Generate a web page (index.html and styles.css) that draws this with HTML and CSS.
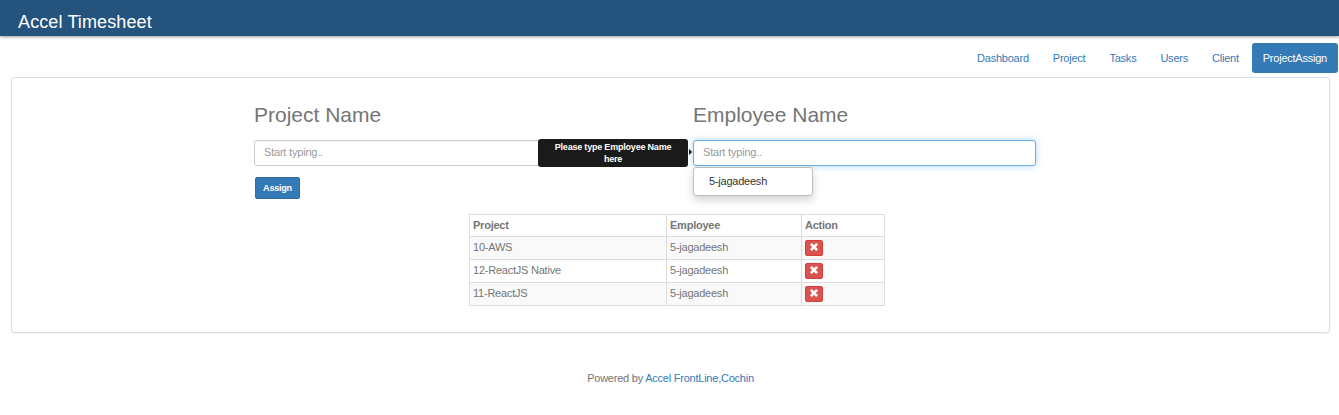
FILE: index.html
```
<!DOCTYPE html>
<html lang="en">
<head>
<meta charset="utf-8">
<title>Accel Timesheet</title>
<link rel="stylesheet" href="styles.css">
</head>
<body>
<header class="topbar"><span class="brand">Accel Timesheet</span></header>
<nav class="nav">
  <a class="nav-link" href="#">Dashboard</a>
  <a class="nav-link" href="#">Project</a>
  <a class="nav-link" href="#">Tasks</a>
  <a class="nav-link" href="#">Users</a>
  <a class="nav-link" href="#">Client</a>
  <a class="nav-link active" href="#">ProjectAssign</a>
</nav>
<main class="panel">
  <div class="fields">
    <section class="field">
      <h3 class="heading">Project Name</h3>
      <input class="input" type="text" placeholder="Start typing..">
      <button class="assign" type="button">Assign</button>
    </section>
    <section class="field">
      <h3 class="heading">Employee Name</h3>
      <div class="combo">
        <input class="input focused" type="text" placeholder="Start typing..">
        <div class="tooltip">Please type Employee Name here</div>
        <ul class="menu"><li>5-jagadeesh</li></ul>
      </div>
    </section>
  </div>
  <table class="table">
    <colgroup><col class="col-project"><col class="col-employee"><col class="col-action"></colgroup>
    <thead><tr><th>Project</th><th>Employee</th><th>Action</th></tr></thead>
    <tbody>
      <tr><td>10-AWS</td><td>5-jagadeesh</td><td class="action"><button class="remove" type="button" aria-label="Remove"><svg viewBox="0 0 10 10"><path d="M1.9 1.9 8.1 8.1M8.1 1.9 1.9 8.1"/></svg></button></td></tr>
      <tr><td>12-ReactJS Native</td><td>5-jagadeesh</td><td class="action"><button class="remove" type="button" aria-label="Remove"><svg viewBox="0 0 10 10"><path d="M1.9 1.9 8.1 8.1M8.1 1.9 1.9 8.1"/></svg></button></td></tr>
      <tr><td>11-ReactJS</td><td>5-jagadeesh</td><td class="action"><button class="remove" type="button" aria-label="Remove"><svg viewBox="0 0 10 10"><path d="M1.9 1.9 8.1 8.1M8.1 1.9 1.9 8.1"/></svg></button></td></tr>
    </tbody>
  </table>
</main>
<footer class="footer">Powered by <a href="#">Accel FrontLine,Cochin</a></footer>
</body>
</html>
```
FILE: styles.css
```
* { box-sizing: border-box; }
body {
  margin: 0;
  background: #fff;
  color: #757575;
  font: 11px/16px "Liberation Sans", Arial, sans-serif;
  letter-spacing: -.23px;
}
a { color: #337ab7; text-decoration: none; }
.topbar {
  height: 36px;
  padding: 12px 18px 0;
  background: #24537d;
  box-shadow: 0 1px 3px rgba(0, 0, 0, .4);
}
.brand { display: block; color: #fff; font-size: 18px; line-height: 20px; letter-spacing: .12px; }
.nav { display: flex; justify-content: flex-end; gap: 2px; padding: 7px 1px 0 0; }
.nav-link { height: 30px; padding: 7px 11px; border-radius: 3px; }
.nav-link.active { background: #337ab7; color: #fff; }
.panel {
  height: 256px;
  margin: 4px 9px 0 11px;
  border: 1px solid #ddd;
  border-radius: 3px;
  box-shadow: 0 1px 1px rgba(0, 0, 0, .05);
}
.fields { display: flex; gap: 96px; height: 136px; padding: 24px 0 0 242px; }
.field { width: 343px; }
.heading { margin: 0 0 12px; font-size: 21px; font-weight: 400; line-height: 26px; letter-spacing: 0; }
.input {
  display: block;
  width: 100%;
  height: 26px;
  padding: 0 9px 2px;
  border: 1px solid #ccc;
  border-radius: 3px;
  outline: 0;
  background: #fff;
  font: 11px/16px "Liberation Sans", Arial, sans-serif;
  letter-spacing: -.2px;
  box-shadow: inset 0 1px 1px rgba(0, 0, 0, .04);
}
.input::placeholder { color: #999; opacity: 1; }
.input.focused {
  border-color: #66afe9;
  box-shadow: inset 0 1px 1px rgba(0, 0, 0, .04), 0 0 7px rgba(102, 175, 233, .5);
}
.assign {
  display: block;
  width: 45px;
  height: 22px;
  margin: 11px 0 0 1px;
  padding: 0;
  border: 1px solid #2e6da4;
  border-radius: 2px;
  background: #337ab7;
  color: #fff;
  font: bold 9px/16px "Liberation Sans", Arial, sans-serif;
  letter-spacing: -.2px;
}
.combo { position: relative; }
.tooltip {
  position: absolute;
  top: -1px;
  right: calc(100% + 5px);
  width: 150px;
  height: 28px;
  padding: 2px 12px;
  border-radius: 3px;
  background: #1a1a1a;
  color: #fff;
  font-size: 9px;
  font-weight: 700;
  line-height: 12px;
  letter-spacing: -.2px;
  text-align: center;
}
.tooltip::after {
  content: "";
  position: absolute;
  left: calc(100% + 1px);
  top: 10px;
  border: 3px solid transparent;
  border-left-color: #000;
  border-right: 0;
}
.menu {
  position: absolute;
  top: 27px;
  left: 0;
  width: 120px;
  height: 29px;
  margin: 0;
  padding: 5px 15px;
  border: 1px solid #bfbfbf;
  border-radius: 3px;
  background: #fff;
  color: #333;
  list-style: none;
  box-shadow: 0 4px 8px rgba(0, 0, 0, .175);
}
.table {
  width: 416px;
  margin-left: 457px;
  border-collapse: collapse;
  table-layout: fixed;
}
.col-project { width: 197px; }
.col-employee { width: 135px; }
.col-action { width: 83px; }
.table th, .table td {
  height: 23px;
  padding: 0 3px 2px;
  border: 1px solid #ddd;
  text-align: left;
  vertical-align: middle;
}
.table th { height: 22px; }
.table td.action { padding-bottom: 0; }
.table tbody tr:nth-child(odd) { background: #f9f9f9; }
.remove {
  display: flex;
  align-items: center;
  justify-content: center;
  width: 18px;
  height: 16px;
  padding: 0 0 2px;
  border: 1px solid #d43f3a;
  border-radius: 2px;
  background: #d9534f;
}
.remove svg { flex: none; width: 10px; height: 10px; fill: none; stroke: #fff; stroke-width: 2.7; }
.footer { margin-top: 37px; padding-left: 2px; text-align: center; }
```
